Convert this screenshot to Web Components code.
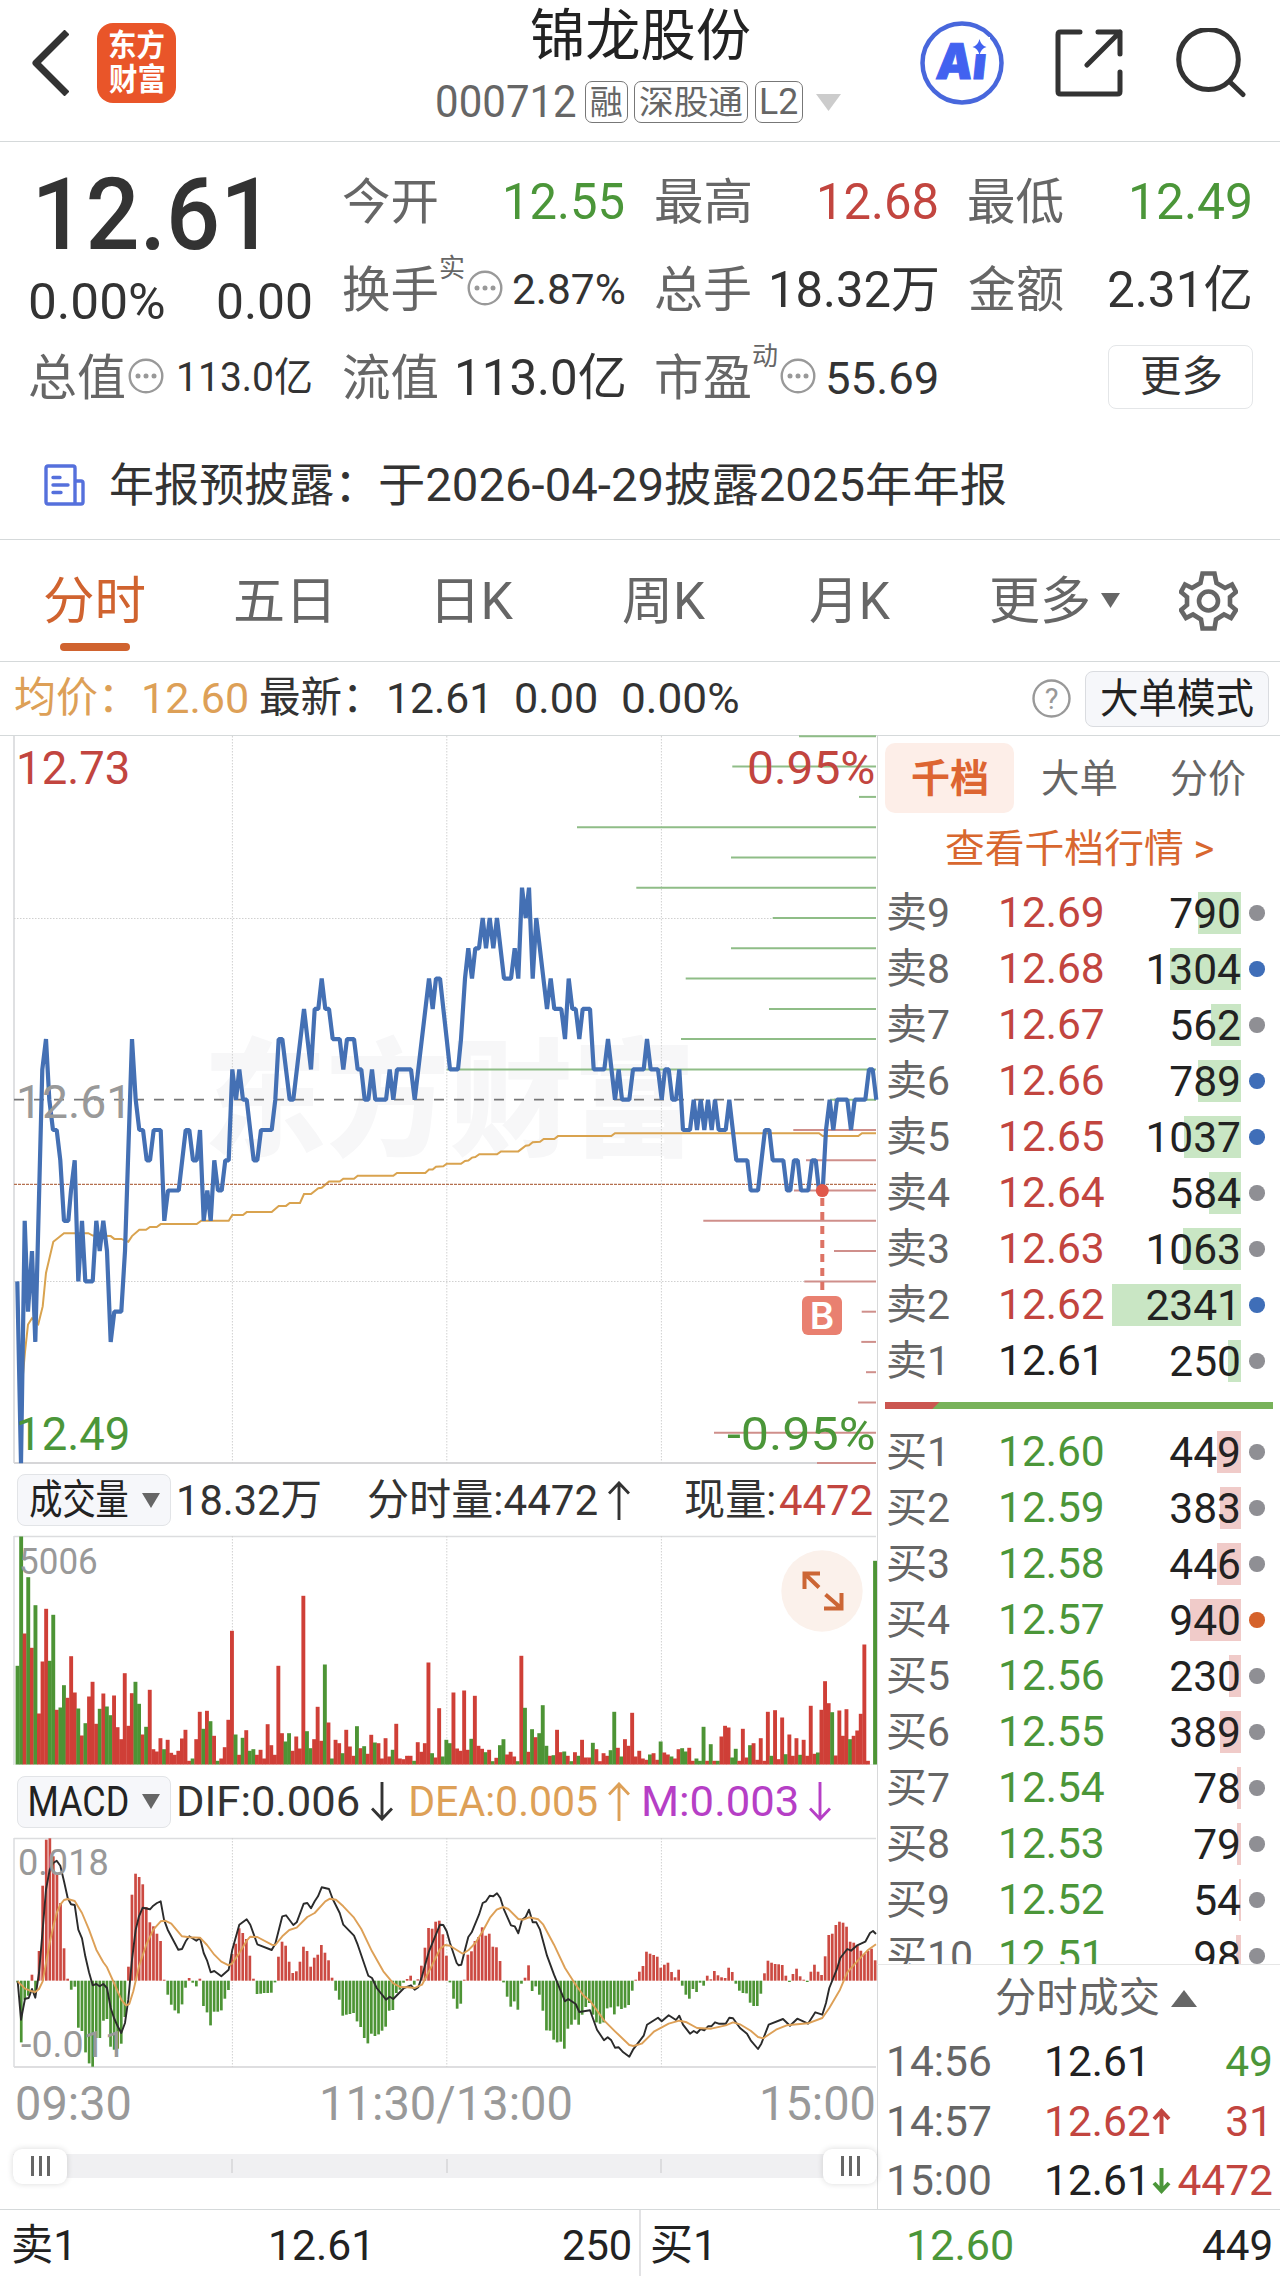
<!DOCTYPE html>
<html lang="zh-CN">
<head>
    <meta charset="UTF-8">
    <meta name="viewport" content="width=device-width, initial-scale=1.0">
    <title>锦龙股份 000712</title>
    <style>
        body {
            margin: 0;
            width: 1280px;
            background: #fff;
            color: #333;
            font-family: Roboto, "Noto Sans CJK SC", sans-serif;
            --red: #c2453f;
            --green: #4b9639;
            --gray: #666;
            --line: #d8d9da;
            --orange: #d0632f;
        }
        main {
            display: grid;
            grid-template-columns: 877px 403px;
            height: 1473px;
        }
    </style>
</head>
<body>
    <app-header></app-header>
    <quote-panel></quote-panel>
    <notice-bar></notice-bar>
    <period-tabs></period-tabs>
    <avg-line></avg-line>
    <main>
        <chart-column></chart-column>
        <order-book></order-book>
    </main>
    <bottom-bar></bottom-bar>

    <script>
        const FONT = 'Roboto, "Noto Sans CJK SC", sans-serif';
        const pen = document.createElement('canvas').getContext('2d');

        // define(tag, html) : html 을 shadowRoot 에 넣는 custom element 등록
        function define(tag, html) {
            customElements.define(tag, class extends HTMLElement {
                connectedCallback() {
                    if (this.shadowRoot) return;
                    this.attachShadow({mode : 'open'});
                    this.shadowRoot.innerHTML = typeof html === 'function' ? html(this) : html;
                }
            });
        }

        // <ink-text w size weight> : the visible part of the text is w px wide
        class InkText extends HTMLElement {
            connectedCallback() {
                if (this.shadowRoot) return;
                const size = this.getAttribute('size');
                const weight = this.getAttribute('weight') || 400;
                const w = +this.getAttribute('w');
                pen.font = `${weight} ${size}px ${FONT}`;
                const m = pen.measureText(this.textContent);
                const ink = m.actualBoundingBoxLeft + m.actualBoundingBoxRight;
                const k = w / ink;
                this.attachShadow({mode : 'open'});
                this.shadowRoot.innerHTML = `
                    <style>
                        :host { display: block; flex: none; width: ${w}px; height: ${size}px; font: ${weight} ${size}px/${size}px ${FONT}; }
                        span { display: block; width: max-content; white-space: nowrap; transform-origin: 0 0;
                            transform: translateX(${m.actualBoundingBoxLeft * k}px) scaleX(${k}); }
                    </style>
                    <span><slot></slot></span>`;
            }
        }
        customElements.define('ink-text', InkText);

        define('info-dot', `
            <style>:host { display: block; flex: none; width: 36px; height: 36px; } svg { display: block; }</style>
            <svg width="36" height="36" fill="#999">
                <circle cx="18" cy="18" r="16.3" fill="none" stroke="#999" stroke-width="2.4"/>
                <circle cx="10" cy="18" r="2.5"/><circle cx="18" cy="18" r="2.5"/><circle cx="26" cy="18" r="2.5"/>
            </svg>`);

        define('tri-mark', el => {
            const w = el.getAttribute('w'), h = el.getAttribute('h');
            const d = el.hasAttribute('up') ? `M0 ${h}H${w}L${w / 2} 0z` : `M0 0H${w}L${w / 2} ${h}z`;
            return `<style>:host { display: block; flex: none; } svg { display: block; }</style>
                <svg width="${w}" height="${h}"><path d="${d}" fill="currentColor"/></svg>`;
        });

        // thin arrow used beside the indicator values
        define('arrow-mark', el => `
            <style>:host { display: block; flex: none; } svg { display: block; ${el.hasAttribute('down') ? 'transform: scaleY(-1);' : ''} }</style>
            <svg width="22" height="39" fill="none" stroke="currentColor" stroke-width="2.9">
                <path d="M11 39V2M1 12.5L11 2L21 12.5"/>
            </svg>`);

        define('app-header', `
            <style>
                :host { display: grid; grid-template-columns: 1fr 404px 1fr; height: 141px; border-bottom: 1px solid #d5d9da; }
                .side { display: flex; align-items: center; height: 125px; }
                .left { padding-left: 31px; gap: 28px; }
                .right { justify-content: flex-end; padding-right: 34px; }
                .logo { width: 79px; height: 80px; border-radius: 16px; background: #e95529; color: #fff;
                    display: flex; flex-direction: column; align-items: center; justify-content: center; gap: 4px; }
                .logo ink-text { margin-top: -1px; }
                .title { display: flex; justify-content: center; align-items: center; height: 71px; color: #222; }
                .sub { display: flex; align-items: center; height: 62px; color: var(--gray); margin-left: -1px; }
                .tag { display: flex; align-items: center; justify-content: center; box-sizing: border-box; height: 42px;
                    border: 1.5px solid #777; border-radius: 7px; }
                svg { display: block; flex: none; }
            </style>
            <div class="side left">
                <svg width="38" height="66" fill="none" stroke="#333" stroke-width="7" stroke-linejoin="round"><path d="M36 2L5 33L36 64"/></svg>
                <div class="logo">
                    <ink-text w="55" size="31" weight="700">东方</ink-text>
                    <ink-text w="55" size="31" weight="700">财富</ink-text>
                </div>
            </div>
            <div>
                <div class="title"><ink-text w="219" size="56">锦龙股份</ink-text></div>
                <div class="sub">
                    <ink-text w="139" size="44">000712</ink-text>
                    <div class="tag" style="width:43.5px;margin-left:8.5px"><ink-text w="31" size="33">融</ink-text></div>
                    <div class="tag" style="width:114px;margin-left:6px"><ink-text w="102" size="33">深股通</ink-text></div>
                    <div class="tag" style="width:47.5px;margin-left:7px"><ink-text w="36" size="36">L2</ink-text></div>
                    <tri-mark w="25" h="17" style="color:#ccc;margin-left:13px"></tri-mark>
                </div>
            </div>
            <div class="side right">
                <svg width="84" height="84" viewBox="0 0 84 84">
                    <circle cx="42" cy="42" r="39.5" fill="#fff" stroke="#4867dc" stroke-width="4.5"/>
                    <text x="0" y="0" transform="translate(15 58) skewX(-6)" font-family="Inter, sans-serif" font-weight="900" font-size="49" fill="#4262f0" stroke="#4262f0" stroke-width="1" textLength="50" lengthAdjust="spacingAndGlyphs">Ai</text>
                    <path d="M50 16h20v17H50z" fill="#fff"/>
                    <path d="M59.500 18Q61 24.500 66.500 26Q61 27.500 59.500 34Q58 27.500 52.500 26Q58 24.500 59.500 18z" fill="#4262f0"/>
                </svg>
                <svg width="68" height="68" style="margin-left:51px" fill="none" stroke="#333" stroke-width="5" stroke-linecap="round" stroke-linejoin="round">
                    <path d="M25 3H5.500Q3 3 3 5.500V62.500Q3 65 5.500 65H62.500Q65 65 65 62.500V43M65 25V3H43M65 3L32 36"/>
                </svg>
                <svg width="70" height="70" style="margin-left:53px" fill="none" stroke="#333" stroke-width="5" stroke-linecap="round">
                    <ellipse cx="32.500" cy="31.500" rx="29.800" ry="30"/><path d="M55 55L67 66.500"/>
                </svg>
            </div>`);

        define('quote-cell', `
            <style>
                :host { display: flex; align-items: center; height: 88px; }
                .label { display: flex; align-items: center; height: 88px; color: var(--gray); }
                .value { display: flex; align-items: center; margin-left: auto; }
            </style>
            <div class="label"><slot name="label"></slot></div>
            <div class="value"><slot></slot></div>`);

        define('quote-panel', () => {
            const cell = (label, w, size, value, cls = '', extra = '') => `
                <quote-cell class="${cls}"><ink-text slot="label" w="94" size="49">${label}</ink-text>${extra}<ink-text w="${w}" size="${size}">${value}</ink-text></quote-cell>`;
            const dot = (sup, gap) => (sup ? `<ink-text slot="label" class="sup" w="24" size="26">${sup}</ink-text>` : '') +
                `<info-dot slot="label" style="margin:-4px 0 0 ${gap}px"></info-dot>`;
            return `
            <style>
                :host { display: grid; grid-template-columns: repeat(4, 281px); grid-auto-rows: 88px; justify-content: space-between;
                    height: 273px; padding: 16px 30px 0; }
                .price { grid-row: span 2; }
                .big { display: flex; align-items: center; height: 113px; padding-left: 9px; }
                .change { display: flex; align-items: center; justify-content: space-between; height: 61px; }
                .sup { margin: 0 0 44px 3px; }
                .up { color: var(--red); }
                .down { color: var(--green); }
                .more { justify-self: end; align-self: center; display: flex; align-items: center; justify-content: center;
                    width: 143px; height: 62px; border: 1.5px solid #e4e6e8; border-radius: 8px; margin: -3px -3px 0 0; }
            </style>
            <div class="price">
                <div class="big"><ink-text w="217" size="101" weight="500">12.61</ink-text></div>
                <div class="change"><ink-text w="134" size="50">0.00%</ink-text><ink-text w="93" size="50">0.00</ink-text></div>
            </div>
            ${cell('今开', 118, 50, '12.55', 'down')}
            ${cell('最高', 117, 50, '12.68', 'up')}
            ${cell('最低', 118, 50, '12.49', 'down')}
            ${cell('换手', 111, 42, '2.87%', '', dot('实', 3))}
            ${cell('总手', 165, 50, '18.32万')}
            ${cell('金额', 141, 50, '2.31亿')}
            ${cell('总值', 132, 40, '113.0亿', '', dot('', 4))}
            ${cell('流值', 166, 50, '113.0亿')}
            ${cell('市盈', 109, 45, '55.69', '', dot('动', 3))}
            <div class="more"><ink-text w="80" size="42">更多</ink-text></div>`;
        });

        define('notice-bar', `
            <style>
                :host { display: flex; align-items: center; height: 108px; padding-left: 44px; border-bottom: 1px solid #d5d9da; }
                svg { display: block; }
            </style>
            <svg width="41" height="42" fill="none" stroke="#5570dc" stroke-width="3.4" stroke-linejoin="round" stroke-linecap="round">
                <path d="M4 2H29Q31 2 31 4V40H4Q2 40 2 38V4Q2 2 4 2zM31 17H37Q39 17 39 19V38Q39 40 37 40H31M9 13.500H16M9 21H24M9 28.500H17"/>
            </svg>
            <ink-text w="238" size="46" style="margin-left:26px">年报预披露：</ink-text>
            <ink-text w="626" size="46" style="margin-left:31px">于2026-04-29披露2025年年报</ink-text>`);

        define('period-tabs', `
            <style>
                :host { display: grid; grid-template-columns: 190px 183px 204px 174px 197px 201px 119px; height: 121px; border-bottom: 1px solid #d5d9da; color: var(--gray); }
                div { display: flex; flex-direction: column; align-items: center; height: 121px; }
                ink-text { margin-top: 36px; }
                i { width: 70px; height: 8px; border-radius: 4px; background: var(--orange); margin-top: 16px; }
                .on { color: var(--orange); }
                .more { flex-direction: row; align-items: flex-start; justify-content: center; gap: 12px; padding-left: 13px; }
                tri-mark { margin-top: 53px; }
                svg { display: block; margin-top: 31px; }
            </style>
            <div class="on"><ink-text w="100" size="51">分时</ink-text><i></i></div>
            <div><ink-text w="94" size="51">五日</ink-text></div>
            <div><ink-text w="76" size="51">日K</ink-text></div>
            <div><ink-text w="82" size="51">周K</ink-text></div>
            <div><ink-text w="80" size="51">月K</ink-text></div>
            <div class="more"><ink-text w="98" size="51">更多</ink-text><tri-mark w="19" h="15"></tri-mark></div>
            <div><svg width="59" height="60" fill="none" stroke="#666" stroke-width="4.6">
                <path d="M23.500 2.500H35.500L37.500 12L46 17L53 13.500L57 21L51 26V34L57 39L52 47L45 43.500L37 48.500L35.500 57.500H23.500L22 48.500L14 43.500L7 47L2 39L8 34V26L2 21L6 13.500L13 17L21.500 12z"/>
                <circle cx="29.500" cy="30" r="9.500"/>
            </svg></div>`);

        define('avg-line', `
            <style>
                :host { display: flex; align-items: center; height: 74px; padding: 0 11px 0 15px; box-sizing: border-box; border-bottom: 1px solid #d5d9da; }
                .avg { display: flex; gap: 32px; color: #dda057; }
                .now { display: flex; margin-left: 13px; }
                .mode { display: flex; align-items: center; justify-content: center; width: 182px; height: 54px; margin-left: 14px;
                    background: #f6f7fa; border: 1px solid #dadce0; border-radius: 8px; color: #222; }
                .mode ink-text { margin-top: 2px; }
                svg { margin-left: auto; }
            </style>
            <div class="avg"><ink-text w="97" size="42">均价：</ink-text><ink-text w="103" size="43">12.60</ink-text></div>
            <div class="now">
                <ink-text w="96" size="42">最新：</ink-text>
                <ink-text w="96" size="43" style="margin-left:33px">12.61</ink-text>
                <ink-text w="80" size="43" style="margin-left:31px">0.00</ink-text>
                <ink-text w="115" size="43" style="margin-left:27px">0.00%</ink-text>
            </div>
            <svg width="39" height="39" viewBox="0 0 39 39"><circle cx="19.500" cy="19.500" r="18" fill="none" stroke="#999" stroke-width="2.4"/>
                <text x="19.500" y="29.500" text-anchor="middle" font-family="Roboto, sans-serif" font-size="29" fill="#999">?</text></svg>
            <div class="mode"><ink-text w="152" size="41">大单模式</ink-text></div>`);

        // ---- chart data ----
        // both halves of the session: x in 1/3 px, the afternoon one starts at 1320
        const AFTERNOON = 1320;
        const points = (am, pm) => {
            const read = (s, dx) => s.trim().split(/\s+/).map(p => p.split(',').map(Number)).map(([x, y]) => [x + dx, y]);
            return [...read(am, 0), ...read(pm, AFTERNOON)];
        };
        const line = (pts, fy) => pts.map(([x, y]) => (x / 3).toFixed(1) + ',' + fy(y).toFixed(1)).join(' ');

        // price in cents from the last close
        const price = points(
            `52,-6 63,-12 74,-4 84,-7 96,-5 106,-8 127,1 138,2 148,0 159,-1 170,-1 181,-2 192,-4 205,-4 213,-3 224,-2 235,-6 246,-4 256,-6 278,-6 289,-4 299,-5 310,-4 321,-5 332,-8 343,-7 364,-7 375,-5 396,2 407,0 418,-1 429,-1 440,-2 450,-2 461,-1 482,-1 493,-4 504,-3 536,-3 557,-1 568,-1 579,-2 590,-2 600,-1 611,-4 622,-3 632,-4 643,-2 654,-3 665,-3 676,-2 686,-2 697,1 708,0 718,1 729,0 740,0 761,-2 772,-2 783,-1 815,-1 826,0 836,2 847,2 869,0 880,0 912,3 933,1 944,3 955,3 965,4 976,3 987,3 998,2 1019,2 1030,1 1041,2 1062,2 1073,1 1084,1 1094,0 1105,0 1116,1 1126,0 1158,0 1169,1 1180,0 1191,1 1233,1 1244,0 1287,4 1298,3 1308,4 1320,4`,
            `20,2 30,1 54,1 63,2 75,4 85,5 96,4 106,5 117,5 128,6 138,5 149,6 160,5 171,6 192,4 213,4 224,5 235,4 246,7 257,6 267,7 278,4 289,6 321,3 332,4 343,3 364,3 375,2 386,4 397,3 407,3 418,2 428,3 450,3 461,1 493,1 504,2 525,0 536,1 546,0 568,0 579,1 611,1 621,2 632,1 654,1 665,0 675,1 686,1 697,0 708,0 718,1 729,-1 750,-1 761,0 771,-1 782,0 793,-1 804,0 815,-1 825,0 836,-1 857,-1 868,0 889,-2 922,-2 932,-3 954,-3 975,-1 988,-1 998,-2 1030,-2 1041,-3 1051,-3 1062,-2 1073,-2 1083,-3 1105,-3 1116,-2 1127,-2 1137,-3 1148,-3 1158,-1 1169,0 1180,-1 1191,0 1222,0 1233,-1 1244,0 1276,0 1287,1 1298,1 1309,0`);
        const average = points(
            `62,1400 75,1300 84,1243 96,1230 115,1242 128,1205 138,1135 160,1070 192,1052 265,1052 278,1057 332,1058 343,1064 364,1064 385,1070 396,1058 418,1045 438,1045 450,1039 470,1039 482,1033 590,1033 604,1026 686,1026 697,1014 729,1014 740,1008 815,1008 836,995 858,995 869,989 900,989 912,970 933,970 955,958 965,957 987,944 1019,944 1030,938 1062,938 1073,932 1180,932 1191,926 1276,926 1287,919 1298,919 1308,913 1330,912`,
            `20,907 63,907 75,901 85,900 96,894 106,893 118,887 171,887 183,881 235,881 257,869 267,868 278,862 300,861 311,855 343,855 354,849 514,849 525,843 1137,843 1148,849 1255,849 1266,843 1308,843`);
        // left end of each depth line, from +12 cents down to -12
        const depth = [1077, 877, 1257, 411, 873, 589, 998, 873, 737, 987, 723, 20, 1170, 1060, 1098, 1062, 790, 1182, 1093, 1265, 1264, 1278, 1254, 822, 1131];

        // top of each volume bar, g = green
        const volume = `618g 230g 521 352g 564 436g 761 605 447 603g 465g 750 743g 676g 714 589 698 746g 827 790g 710 666 792 747g 701 740g 766g 707 802 838
            640 798 700 666g 732g 824 801g 690 868 875 835 868g 840 879 885 873 836 810 903 896g 838 756 807g 753 784g 828 903g 896 862 780
            513 824g 885 834g 811 873g 868g 885 870 896 793 856 885 618 820 845g 820g 873 830 866 408 814g 865g 838 741 843 614g 788 896g 840
            850 880g 810 860 888 799g 865 859g 882 825 848g 850 896 835 890 870g 792 896 898 888 888 903g 847 876 850 608 880g 893 745 890g
            840g 850g 698 866 873 692 870 837g 708 858 867 877g 870 904g 894 856g 838g 884 876 890 904g 588 744g 876 808g 832 820g 736g 858g 888
            886g 810 877 875g 888 904g 877 888g 840 893 893 849g 868 904 880 888 871g 756g 864 890g 838 858 759 890 873 896 900 884g 880 900
            845g 878 884 890g 896 868 865g 875g 864 903 896g 903g 801g 903 853g 903 903g 830 798 803 893g 867g 903 807 893 856g 850 900 835 903
            756 888g 751 898 773 883g 824 888 835 885g 840 888 738 882 878g 750 664 730 757g 887 752 828 748 838g 828 812 762 554 903 914 303g`.trim().split(/\s+/);

        // end of each macd bar, the axis is at 483
        const macd = `488 668 540 528 465 520 394 198 60 56 110 165 250 386 477 510 501 624 634 698 731 741 655 655 603 598 681 690 687 672
            592 441 225 162 172 194 262 308 320 342 364 480 525 555 572 581 554 504 475 489 500 477 559 578 617 576 576 572 537 511
            403 372 326 340 358 408 477 523 522 520 520 519 488 411 366 378 426 460 455 426 381 394 441 414 405 376 399 422 474 513
            540 588 585 583 580 605 622 655 671 642 649 644 633 621 573 571 520 510 489 478 468 495 479 438 384 325 327 306 303 344
            408 488 537 567 552 480 405 395 364 352 323 348 342 381 383 424 488 531 561 545 570 492 474 437 514 500 525 573 632 633
            660 668 666 687 627 615 600 615 585 562 550 585 608 612 608 566 563 584 560 568 564 556 513 480 456 439 396 402 406 411
            444 435 429 457 473 450 498 525 537 508 517 489 498 468 479 454 467 473 475 444 457 492 513 520 521 549 559 559 522 461
            423 429 433 434 436 468 487 463 447 470 480 487 456 435 456 466 410 346 342 316 306 309 321 366 369 378 393 403 393 387 422`.trim().split(/\s+/).map(Number);
        const dif = points(
            `53,485 63,600 75,537 86,535 96,508 106,534 117,460 128,330 138,210 149,150 160,130 170,123 181,138 192,185 203,235 213,254 224,256 235,330 246,356 256,410 267,458 278,497 289,493 299,500 310,493 321,505 332,565 342,595 353,620 364,640 375,610 385,540 396,420 407,330 417,290 428,264 450,269 460,258 471,250 482,245 492,300 503,330 535,390 546,388 557,365 568,350 589,363 600,355 611,400 621,422 632,458 643,454 664,470 686,450 697,390 718,315 740,299 751,315 772,374 815,391 826,372 847,290 858,287 880,316 890,308 911,252 922,250 933,266 944,245 954,230 965,203 987,208 998,238 1019,280 1030,315 1062,348 1073,375 1105,468 1116,475 1130,505 1158,540 1169,531 1180,538 1212,505 1233,497 1244,510 1255,503 1266,470 1287,395 1298,368 1320,315 1330,316`,
            `20,335 30,370 50,430 56,437 64,435 75,390 85,352 95,338 117,285 128,250 138,245 149,228 160,230 171,221 181,235 192,270 213,317 224,320 235,341 246,300 257,292 267,270 278,308 289,308 300,330 321,408 342,465 375,545 385,538 407,553 418,577 450,572 471,630 492,662 503,653 514,662 525,684 536,683 550,698 568,711 579,690 611,648 621,615 654,594 665,605 686,587 708,601 718,588 729,615 750,642 761,634 771,640 782,628 793,632 804,620 814,620 825,608 836,612 857,612 868,594 879,596 900,625 921,642 932,662 954,688 964,672 986,615 1029,598 1050,618 1072,597 1104,612 1126,578 1147,585 1158,550 1168,505 1190,450 1201,415 1222,388 1233,393 1250,378 1276,366 1290,340 1299,334 1308,343`);
        const dea = points(
            `53,485 75,507 96,515 106,517 117,508 128,485 138,430 149,370 160,320 170,280 181,255 192,241 203,238 224,244 246,280 267,330 289,390 310,428 321,443 342,490 364,540 378,557 388,553 400,515 417,440 439,375 460,330 482,305 495,303 514,312 546,350 568,353 600,354 621,376 643,405 664,426 686,437 697,431 718,400 740,363 751,351 772,352 815,375 826,376 847,350 868,331 890,324 922,292 944,280 976,245 990,237 1008,240 1030,260 1062,294 1084,328 1116,395 1150,455 1180,491 1201,502 1223,503 1244,505 1266,495 1287,455 1320,388`,
            `15,376 30,378 68,402 85,392 106,370 128,335 150,294 170,270 190,262 205,268 235,298 250,300 267,293 295,299 310,315 342,375 375,445 407,495 430,527 450,543 492,602 525,635 568,676 580,679 605,672 643,635 686,612 718,603 740,608 771,625 814,627 857,617 879,608 900,614 932,633 954,652 970,656 1008,630 1040,617 1104,611 1147,595 1168,565 1200,510 1222,458 1254,422 1285,390 1308,374`);

        const STEP = 3.573, FIRST = 17.6;
        const columns = h => [232.4, 446.8, 661.4].map(x => `<path d="M${x} 0V${h}" stroke="#d0d0d0" stroke-dasharray="1.5 1.5"/>`).join('');
        const CHART_CSS = `
            :host { display: block; position: relative; width: 877px; }
            svg { display: block; position: relative; overflow: visible; }
            ink-text, .over { position: absolute; }`;

        define('price-chart', () => {
            const y = n => 363.7 - 30.28 * n;
            const bars = depth.map((x, i) => {
                const yy = y(12 - i).toFixed(1);
                return `<path d="M${((x + AFTERNOON) / 3).toFixed(1)} ${yy}H876" stroke="${i < 13 ? '#8fbd87' : '#cf8f8b'}" stroke-width="2"/>`;
            }).join('');
            return `
            <style>${CHART_CSS} :host { height: 728px; }</style>
            <ink-text w="479" size="127" weight="900" style="left:209px;top:303px;color:#f7f7f8">东方财富</ink-text>
            <svg width="877" height="728" fill="none">
                <path d="M14 0V727" stroke="#dfe0e2" stroke-width="2"/><path d="M14 727H876" stroke="#d6d6d8" stroke-width="2"/>
                ${columns(727)}
                <path d="M14 182.500H876M14 545.500H876" stroke="#d0d0d0" stroke-dasharray="1.5 1.5"/>
                <path d="M14 363.700H876" stroke="#777" stroke-width="1.8" stroke-dasharray="10 10"/>
                ${bars}
                <polyline points="${line(average, v => v / 2.0907 - 6)}" stroke="#d9a34f" stroke-width="2"/>
                <path d="M14 448.400H876" stroke="#b5704f" stroke-width="1.3" stroke-dasharray="3 1"/>
                <polyline points="${line(price, y)}" stroke="#4470b4" stroke-width="4.2" stroke-linejoin="bevel"/>
                <path d="M822.300 462V560" stroke="#dd7365" stroke-width="4" stroke-dasharray="8 6"/>
                <circle cx="822.300" cy="454.600" r="6.500" fill="#e0584a"/>
            </svg>
            <ink-text w="109" size="47" style="left:19px;top:8px;color:var(--red)">12.73</ink-text>
            <ink-text w="104" size="47" style="left:19px;top:342px;color:#999">12.61</ink-text>
            <ink-text w="109" size="47" style="left:19px;top:674px;color:var(--green)">12.49</ink-text>
            <ink-text w="125" size="47" style="left:749px;top:8px;color:var(--red)">0.95%</ink-text>
            <ink-text w="147" size="47" style="left:727px;top:674px;color:var(--green)">-0.95%</ink-text>
            <svg class="over" width="40" height="39" style="left:802px;top:560px;position:absolute">
                <rect width="40" height="39" rx="6" fill="#e98070"/>
                <text x="20" y="33" text-anchor="middle" font-family="Inter, sans-serif" font-weight="600" font-size="37" fill="#fff">B</text>
            </svg>`;
        });

        define('volume-chart', () => {
            const bars = volume.map((v, i) => {
                const top = parseInt(v);
                return `<rect x="${(FIRST - 2 + i * STEP).toFixed(1)}" y="${((top - 230) / 3 + .5).toFixed(1)}" width="3.9" height="${((914 - top) / 3).toFixed(1)}" fill="${v.endsWith('g') ? '#4d9435' : '#cf3f37'}"/>`;
            }).join('');
            return `
            <style>${CHART_CSS} :host { height: 229px; }
                .over { left: 780.500px; top: 13.500px; position: absolute; }
            </style>
            <svg width="877" height="229" fill="none">
                <path d="M14 .5H876M14 0V229" stroke="#dcdddf" stroke-width="1.5"/><path d="M14 228.500H876" stroke="#eee"/>
                ${columns(229)}${bars}
            </svg>
            <ink-text w="76" size="37" style="left:21px;top:7px;color:#999">5006</ink-text>
            <svg class="over" width="82" height="82" fill="none" stroke="#cc6635" stroke-width="4">
                <circle cx="41" cy="41" r="40.700" fill="#fbf1eb" stroke="none"/>
                <path d="M39 23.500H23.500V39M24 24L38 37.500M60.500 43V58.500H43M60 58L44.500 44.500"/>
            </svg>`;
        });

        define('macd-chart', () => {
            const y = v => (v - 55) / 3;
            const bars = macd.map((v, i) => {
                const a = y(Math.min(v, 483)), b = y(Math.max(v, 483));
                return `<rect x="${(FIRST - 1.3 + i * STEP).toFixed(1)}" y="${a.toFixed(1)}" width="2.7" height="${(b - a).toFixed(1)}" fill="${v < 483 ? '#cc4a42' : '#4d9435'}"/>`;
            }).join('');
            return `
            <style>${CHART_CSS} :host { height: 230px; }</style>
            <svg width="877" height="230" fill="none">
                <path d="M14 .5H876M14 0V229" stroke="#dcdddf" stroke-width="1.5"/><path d="M14 229H876" stroke="#dedee0" stroke-width="2"/>
                ${columns(229)}${bars}
                <polyline points="${line(dif, y)}" stroke="#2b2b2b" stroke-width="1.9" stroke-linejoin="round"/>
                <polyline points="${line(dea, y)}" stroke="#dda057" stroke-width="1.9" stroke-linejoin="round"/>
            </svg>
            <ink-text w="87" size="37" style="left:20px;top:5.500px;color:#999">0.018</ink-text>
            <ink-text w="98" size="37" style="left:21px;top:188px;color:#999">-0.011</ink-text>`;
        });

        define('indicator-head', `
            <style>
                :host { display: flex; align-items: center; height: 72px; padding-left: 17px; }
                .pick { display: flex; align-items: center; box-sizing: border-box; width: 154px; height: 52px; padding-left: 12px; gap: 14px;
                    background: #f6f7fa; border: 1px solid #e2e4e7; border-radius: 8px; margin-right: 8px; color: #222; }
                tri-mark { color: #666; }
            </style>
            <div class="pick"><slot name="name"></slot><tri-mark w="18" h="15"></tri-mark></div>
            <slot></slot>`);

        define('time-slider', `
            <style>
                :host { display: flex; align-items: center; height: 52px; margin-left: 13px;
                    background: linear-gradient(#f0f0f2, #f0f0f2) 0 50% / 100% 24px no-repeat; }
                .handle { display: flex; align-items: center; justify-content: center; gap: 5px; width: 54px; height: 35px; border-radius: 9px;
                    background: #fff; box-shadow: 0 0 6px rgba(0, 0, 0, .15); }
                .handle i { width: 3px; height: 20px; background: #666; }
                .tick { width: 2px; height: 14px; background: #dcdcde; }
            </style>
            <div class="handle"><i></i><i></i><i></i></div>
            <div class="tick" style="margin-left:164px"></div>
            <div class="tick" style="margin-left:213px"></div>
            <div class="tick" style="margin-left:212px"></div>
            <div class="handle" style="margin-left:auto"><i></i><i></i><i></i></div>`);

        define('chart-column', `
            <style>
                :host { display: block; box-sizing: border-box; width: 878px; height: 1473px; border-right: 1.500px solid var(--line); }
                .axis { display: flex; align-items: center; justify-content: space-between; height: 72px; padding: 0 3px 0 17px; color: #999; }
            </style>
            <price-chart></price-chart>
            <indicator-head>
                <ink-text slot="name" w="98" size="41">成交量</ink-text>
                <ink-text w="141" size="43">18.32万</ink-text>
                <ink-text w="229" size="43" style="margin-left:48px">分时量:4472</ink-text>
                <arrow-mark style="margin-left:11px"></arrow-mark>
                <ink-text w="89" size="43" style="margin-left:55px">现量:</ink-text>
                <ink-text w="92" size="43" style="margin-left:6px;color:var(--red)">4472</ink-text>
            </indicator-head>
            <volume-chart></volume-chart>
            <indicator-head style="height:73px">
                <ink-text slot="name" w="98" size="42">MACD</ink-text>
                <ink-text w="180" size="43">DIF:0.006</ink-text>
                <arrow-mark down style="margin-left:12px"></arrow-mark>
                <ink-text w="186" size="43" style="margin-left:18px;color:#dda057">DEA:0.005</ink-text>
                <arrow-mark style="margin-left:11px;color:#dda057"></arrow-mark>
                <ink-text w="153" size="43" style="margin-left:14px;color:#b63fc6">M:0.003</ink-text>
                <arrow-mark down style="margin-left:12px;color:#b63fc6"></arrow-mark>
            </indicator-head>
            <macd-chart></macd-chart>
            <div class="axis">
                <ink-text w="113" size="48">09:30</ink-text>
                <ink-text w="248" size="48">11:30/13:00</ink-text>
                <ink-text w="111" size="48">15:00</ink-text>
            </div>
            <time-slider></time-slider>`);

        // <book-row name price vol bar dot side>
        define('book-row', el => `
            <style>
                :host { display: grid; grid-template-columns: 112px 122px 121px 1fr; align-items: center; height: 56px; font-size: 42.5px; line-height: 56px; color: #222; white-space: nowrap; }
                .name { font-size: 41px; color: var(--gray); }
                .price { color: ${el.getAttribute('color')}; }
                .vol { text-align: right; height: 42px; line-height: 43px; margin-left: -20px;
                    background: linear-gradient(${el.getAttribute('side') === 'sell' ? '#c9e6c4, #c9e6c4' : '#f0cbc9, #f0cbc9'}) 100% 0 / ${el.getAttribute('bar')}px 100% no-repeat; }
                i { width: 15.500px; height: 15.500px; border-radius: 50%; margin-left: 8px; background: ${el.getAttribute('dot')}; }
            </style>
            <span class="name">${el.getAttribute('name')}</span>
            <span class="price">${el.getAttribute('price')}</span>
            <span class="vol">${el.getAttribute('vol')}</span>
            <i></i>`);

        define('deal-row', el => {
            const dir = el.getAttribute('dir');
            const arrow = dir ? `<svg width="19" height="26" fill="none" stroke="${dir === 'up' ? '#c2453f' : '#4b9639'}" stroke-width="4" style="${dir === 'up' ? '' : 'transform:scaleY(-1)'}"><path d="M9.500 26V3M2 11L9.500 3L17 11"/></svg>` : '';
            return `
            <style>
                :host { display: grid; grid-template-columns: 159px 108px 20px 1fr; align-items: center; height: 59.500px; font-size: 42.500px; color: #222; }
                .time { color: var(--gray); padding-left: 1px; }
                .price { color: ${el.getAttribute('color')}; }
                .vol { text-align: right; color: ${el.getAttribute('vcolor')}; margin-left: -10px; }
                svg { display: block; }
            </style>
            <span class="time">${el.getAttribute('time')}</span>
            <span class="price">${el.getAttribute('price')}</span>
            <span>${arrow}</span>
            <span class="vol">${el.getAttribute('vol')}</span>`;
        });

        define('order-book', () => {
            const G = '#8f8f94', B = '#3f6eb8', O = '#d5622b';
            const sell = [
                [9, '12.69', 790, 43, G], [8, '12.68', 1304, 71, B], [7, '12.67', 562, 30, G], [6, '12.66', 789, 43, B], [5, '12.65', 1037, 57, B],
                [4, '12.64', 584, 32, G], [3, '12.63', 1063, 58, G], [2, '12.62', 2341, 129, B], [1, '12.61', 250, 13, G]];
            const buy = [
                [1, '12.60', 449, 24, G], [2, '12.59', 383, 21, G], [3, '12.58', 446, 24, G], [4, '12.57', 940, 51, O], [5, '12.56', 230, 12, G],
                [6, '12.55', 389, 21, G], [7, '12.54', 78, 4, G], [8, '12.53', 79, 4, G], [9, '12.52', 54, 2, G], [10, '12.51', 98, 5, G]];
            const rows = (list, word, side, color) => list.map(([n, price, vol, bar, dot]) =>
                `<book-row name="${word}${n}" price="${price}" vol="${vol}" bar="${bar}" dot="${dot}" side="${side}" color="${price === '12.61' ? '#222' : color}"></book-row>`).join('');
            return `
            <style>
                :host { display: block; padding: 7px 7px 0 8px; height: 1466px; }
                .tabs { display: flex; align-items: center; height: 70px; color: var(--gray); }
                .tabs .on { display: flex; align-items: center; justify-content: center; width: 129px; height: 70px; border-radius: 10px; background: #fdeee8; color: #dd6532; margin-right: 28px; }
                .tabs ink-text { margin-top: 2px; }
                .link { display: flex; justify-content: center; align-items: center; height: 72px; color: #d8672f; }
                .rows { padding-left: 1px; }
                .ratio { height: 7px; margin: 13px 0 15px; background: linear-gradient(135deg, #cb5650 38px, #78b25a 39px); }
                .buy { height: 540px; overflow: hidden; border-bottom: 1px solid #e6e6e6; margin: 0 -7px 0 -8px; padding: 0 7px 0 9px; }
                .head { display: flex; align-items: center; justify-content: center; height: 67px; gap: 12px; color: var(--gray); padding-left: 34px; }
            </style>
            <div class="tabs">
                <div class="on"><ink-text w="75" size="39" weight="700">千档</ink-text></div>
                <ink-text w="74" size="39">大单</ink-text>
                <ink-text w="74" size="39" style="margin-left:55px">分价</ink-text>
            </div>
            <div class="link"><ink-text w="267" size="39">查看千档行情 &gt;</ink-text></div>
            <div class="rows">${rows(sell, '卖', 'sell', '#c2453f')}</div>
            <div class="ratio"></div>
            <div class="buy">${rows(buy, '买', 'buy', '#4b9639')}</div>
            <div class="head"><ink-text w="163" size="41">分时成交</ink-text><tri-mark up w="26" h="17"></tri-mark></div>
            <deal-row time="14:56" price="12.61" color="#222" vol="49" vcolor="#4b9639"></deal-row>
            <deal-row time="14:57" price="12.62" color="#c2453f" dir="up" vol="31" vcolor="#c2453f"></deal-row>
            <deal-row time="15:00" price="12.61" color="#222" dir="down" vol="4472" vcolor="#c2453f"></deal-row>`;
        });

        define('bottom-bar', `
            <style>
                :host { display: grid; grid-template-columns: 641px 639px; height: 66px; border-top: 1px solid #d5d9da; color: #222; }
                div { display: flex; align-items: center; height: 66px; padding: 4px 9px 0 13px; box-sizing: border-box; }
                .sell { border-right: 2px solid #e2e2e4; }
                .buy { padding-left: 11px; }
            </style>
            <div class="sell"><ink-text w="56" size="43">卖1</ink-text><ink-text w="96" size="43" style="margin:0 auto 0 202px">12.61</ink-text><ink-text w="67" size="43">250</ink-text></div>
            <div class="buy"><ink-text w="57" size="43">买1</ink-text><ink-text w="103" size="43" style="margin:0 auto 0 200px;color:var(--green)">12.60</ink-text><ink-text w="68" size="43">449</ink-text></div>`);
    </script>
</body>
</html>
